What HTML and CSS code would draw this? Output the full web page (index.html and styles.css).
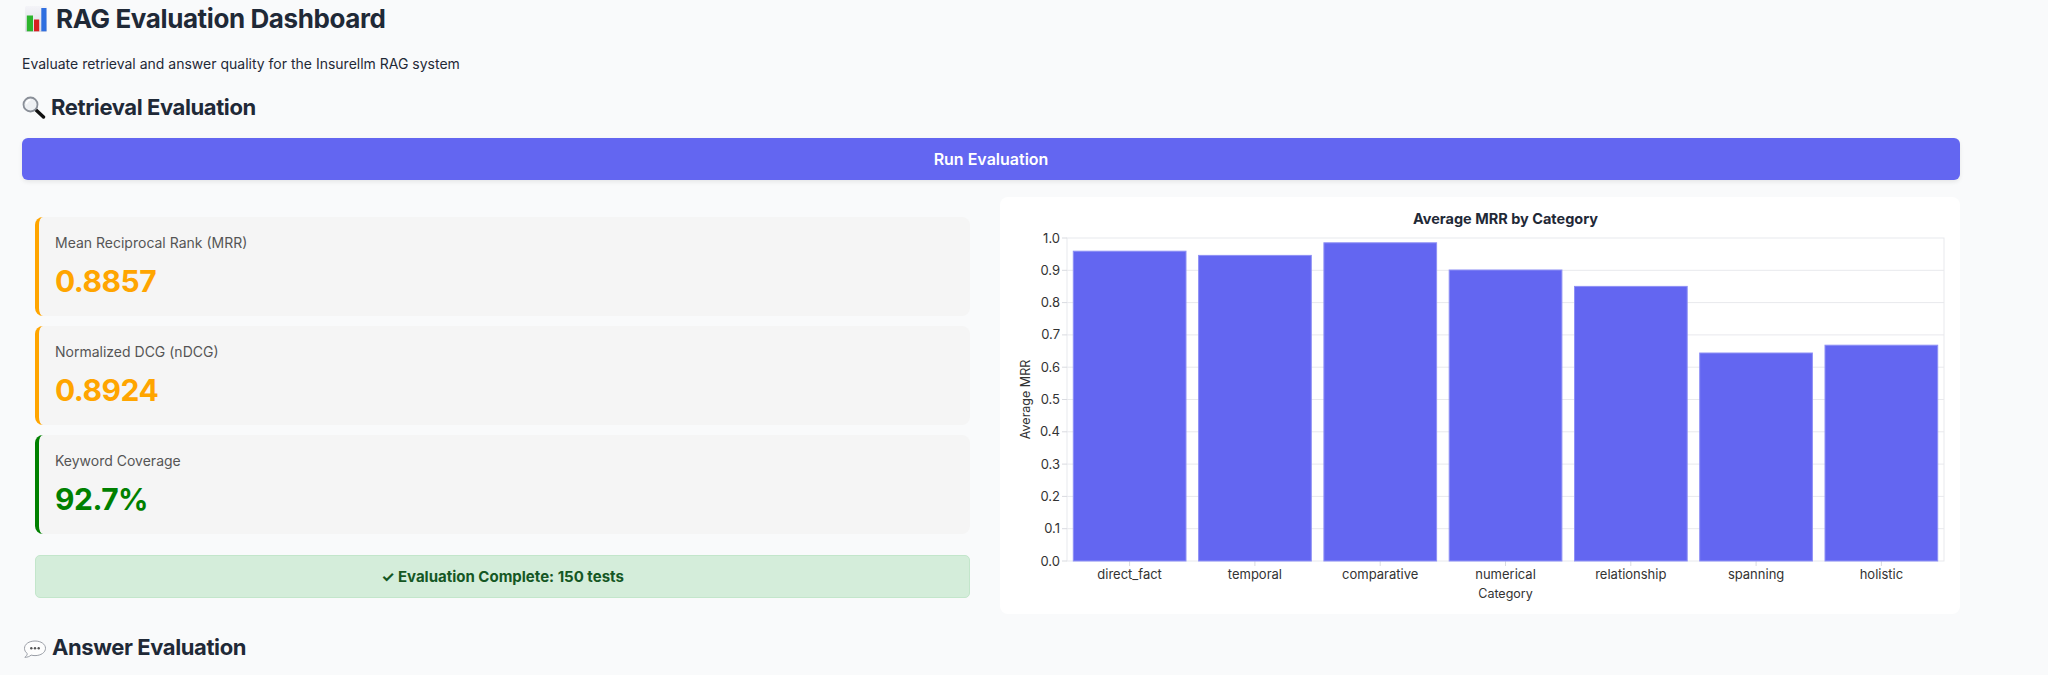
FILE: index.html
```html
<!DOCTYPE html>
<html lang="en">
<head>
<meta charset="utf-8">
<title>RAG Evaluation Dashboard</title>
<link rel="stylesheet" href="styles.css">
</head>
<body>
<main class="page">
  <h1 class="title">
    <svg class="emoji emoji-chart" viewBox="0 0 22 26" aria-hidden="true">
      <defs>
        <linearGradient id="bgG" x1="0" y1="0" x2="0" y2="1">
          <stop offset="0" stop-color="#f4f4f8"/>
          <stop offset="1" stop-color="#dcdce4"/>
        </linearGradient>
      </defs>
      <rect x="0" y="0" width="22" height="26" rx="1.5" fill="url(#bgG)"/>
      <rect x="1.8" y="9.5" width="6.2" height="15.8" fill="#2db52d"/>
      <rect x="9" y="13.5" width="5.2" height="11.8" fill="#d62020"/>
      <rect x="16.3" y="2" width="5.2" height="23.3" fill="#2f6fe0"/>
    </svg>
    <span>RAG Evaluation Dashboard</span>
  </h1>
  <p class="subtitle">Evaluate retrieval and answer quality for the Insurellm RAG system</p>

  <h2 class="section-title">
    <svg class="emoji emoji-search" viewBox="0 0 24 23" aria-hidden="true">
      <line x1="13.5" y1="13.5" x2="21.5" y2="21" stroke="#111" stroke-width="3.4" stroke-linecap="round"/>
      <circle cx="8.5" cy="8.5" r="7" fill="#eef0f3" stroke="#8a8f98" stroke-width="1.8"/>
      <path d="M4.5 7.5 A4.5 4.5 0 0 1 8 4" fill="none" stroke="#fff" stroke-width="1.4" stroke-linecap="round"/>
    </svg>
    <span>Retrieval Evaluation</span>
  </h2>

  <button class="run-btn" type="button">Run Evaluation</button>

  <section class="results">
    <div class="metrics">
      <div class="metric metric-orange">
        <div class="metric-label">Mean Reciprocal Rank (MRR)</div>
        <div class="metric-value">0.8857</div>
      </div>
      <div class="metric metric-orange">
        <div class="metric-label">Normalized DCG (nDCG)</div>
        <div class="metric-value">0.8924</div>
      </div>
      <div class="metric metric-green">
        <div class="metric-label">Keyword Coverage</div>
        <div class="metric-value">92.7%</div>
      </div>
      <div class="status">✓ Evaluation Complete: 150 tests</div>
    </div>

    <div class="chart-card">
      <svg class="chart" viewBox="0 0 960 417" aria-label="Average MRR by Category">
        <text class="chart-title" x="505.5" y="27" text-anchor="middle">Average MRR by Category</text>
        <g class="grid">
          <line x1="67" x2="944" y1="331.7" y2="331.7"/>
          <line x1="67" x2="944" y1="299.4" y2="299.4"/>
          <line x1="67" x2="944" y1="267.1" y2="267.1"/>
          <line x1="67" x2="944" y1="234.8" y2="234.8"/>
          <line x1="67" x2="944" y1="202.5" y2="202.5"/>
          <line x1="67" x2="944" y1="170.2" y2="170.2"/>
          <line x1="67" x2="944" y1="137.9" y2="137.9"/>
          <line x1="67" x2="944" y1="105.6" y2="105.6"/>
          <line x1="67" x2="944" y1="73.3" y2="73.3"/>
          <rect x="67" y="41" width="877" height="323" fill="none"/>
        </g>
        <g class="ticks">
          <line x1="62" x2="67" y1="364" y2="364"/>
          <line x1="62" x2="67" y1="331.7" y2="331.7"/>
          <line x1="62" x2="67" y1="299.4" y2="299.4"/>
          <line x1="62" x2="67" y1="267.1" y2="267.1"/>
          <line x1="62" x2="67" y1="234.8" y2="234.8"/>
          <line x1="62" x2="67" y1="202.5" y2="202.5"/>
          <line x1="62" x2="67" y1="170.2" y2="170.2"/>
          <line x1="62" x2="67" y1="137.9" y2="137.9"/>
          <line x1="62" x2="67" y1="105.6" y2="105.6"/>
          <line x1="62" x2="67" y1="73.3" y2="73.3"/>
          <line x1="62" x2="67" y1="41" y2="41"/>
          <line x1="129.6" x2="129.6" y1="364" y2="369"/>
          <line x1="254.9" x2="254.9" y1="364" y2="369"/>
          <line x1="380.2" x2="380.2" y1="364" y2="369"/>
          <line x1="505.5" x2="505.5" y1="364" y2="369"/>
          <line x1="630.8" x2="630.8" y1="364" y2="369"/>
          <line x1="756.1" x2="756.1" y1="364" y2="369"/>
          <line x1="881.4" x2="881.4" y1="364" y2="369"/>
        </g>
        <g class="bars">
          <rect x="73.3" y="54.2" width="112.7" height="309.8"/>
          <rect x="198.6" y="58.4" width="112.7" height="305.6"/>
          <rect x="323.9" y="45.8" width="112.7" height="318.2"/>
          <rect x="449.2" y="73.0" width="112.7" height="291.0"/>
          <rect x="574.5" y="89.4" width="112.7" height="274.6"/>
          <rect x="699.7" y="156.0" width="112.7" height="208.0"/>
          <rect x="825.0" y="148.2" width="112.7" height="215.8"/>
        </g>
        <g class="y-labels" text-anchor="end">
          <text x="60" y="368.5">0.0</text>
          <text x="60" y="336.2">0.1</text>
          <text x="60" y="303.9">0.2</text>
          <text x="60" y="271.6">0.3</text>
          <text x="60" y="239.3">0.4</text>
          <text x="60" y="207">0.5</text>
          <text x="60" y="174.7">0.6</text>
          <text x="60" y="142.4">0.7</text>
          <text x="60" y="110.1">0.8</text>
          <text x="60" y="77.8">0.9</text>
          <text x="60" y="45.5">1.0</text>
        </g>
        <g class="x-labels" text-anchor="middle">
          <text x="129.6" y="382">direct_fact</text>
          <text x="254.9" y="382">temporal</text>
          <text x="380.2" y="382">comparative</text>
          <text x="505.5" y="382">numerical</text>
          <text x="630.8" y="382">relationship</text>
          <text x="756.1" y="382">spanning</text>
          <text x="881.4" y="382">holistic</text>
        </g>
        <text class="axis-title" x="505.5" y="401" text-anchor="middle">Category</text>
        <text class="axis-title" x="0" y="0" text-anchor="middle" transform="translate(30 202.5) rotate(-90)">Average MRR</text>
      </svg>
    </div>
  </section>

  <h2 class="section-title">
    <svg class="emoji emoji-bubble" viewBox="0 0 24 18" aria-hidden="true">
      <path d="M12 1 C18 1 22.5 4.2 22.5 8.3 C22.5 12.4 18 15.6 12 15.6 C10.6 15.6 9.3 15.4 8.1 15.1 C6.6 16.5 4.2 17.4 1.8 17.3 C3.2 16.4 4.1 15.1 4.3 13.6 C2.5 12.2 1.5 10.4 1.5 8.3 C1.5 4.2 6 1 12 1 Z" fill="#fdfdfd" stroke="#9a9ea6" stroke-width="1"/>
      <circle cx="8.3" cy="8.3" r="1.2" fill="#555"/>
      <circle cx="12" cy="8.3" r="1.2" fill="#555"/>
      <circle cx="15.7" cy="8.3" r="1.2" fill="#555"/>
    </svg>
    <span>Answer Evaluation</span>
  </h2>
</main>
</body>
</html>
```

FILE: styles.css
```css
html, body {
  margin: 0;
  padding: 0;
}

body {
  background: #f9fafb;
  font-family: Inter, "Noto Sans", "Liberation Sans", sans-serif;
  color: #1f2937;
}

.page {
  width: 1938px;
  margin-left: 22px;
  display: flex;
  flex-direction: column;
}

.title {
  margin: 0;
  height: 37px;
  display: flex;
  align-items: center;
  gap: 9px;
  font-size: 26px;
  font-weight: 700;
  letter-spacing: -0.4px;
  color: #1f2937;
}

.emoji {
  flex: none;
  display: block;
}

.emoji-chart {
  width: 22px;
  height: 26px;
  margin-left: 3px;
}

.subtitle {
  margin: 16px 0 0;
  font-size: 14px;
  line-height: 21px;
  color: #1f2937;
}

.section-title {
  margin: 18px 0 0;
  height: 30px;
  display: flex;
  align-items: center;
  gap: 5px;
  font-size: 22px;
  font-weight: 700;
  letter-spacing: -0.4px;
  color: #1f2937;
}

.emoji-search {
  width: 24px;
  height: 23px;
}

.emoji-bubble {
  width: 24px;
  height: 18px;
  margin-left: 1px;
  margin-top: 4px;
}

.run-btn {
  margin-top: 16px;
  height: 42px;
  width: 100%;
  border: none;
  border-radius: 6px;
  background: #6366f1;
  color: #ffffff;
  font-family: inherit;
  font-size: 16px;
  font-weight: 600;
  box-shadow: 0 2px 4px rgba(0, 0, 0, 0.08);
  cursor: pointer;
}

.results {
  margin-top: 17px;
  display: grid;
  grid-template-columns: 948px 960px;
  column-gap: 30px;
  align-items: start;
}

.metrics {
  padding: 20px 0 0 13px;
  display: flex;
  flex-direction: column;
  gap: 10px;
}

.metric {
  height: 99px;
  box-sizing: border-box;
  padding: 16px 16px 0;
  background: #f5f5f5;
  border-radius: 8px;
  border-left: 4px solid #ffa500;
  display: flex;
  flex-direction: column;
  gap: 10px;
}

.metric-green {
  border-left-color: #008000;
}

.metric-label {
  font-size: 14px;
  line-height: 20px;
  color: #555555;
}

.metric-value {
  font-size: 30px;
  line-height: 36px;
  font-weight: 700;
  letter-spacing: -0.5px;
  color: #ffa500;
}

.metric-green .metric-value {
  color: #008000;
}

.status {
  margin-top: 11px;
  height: 43px;
  box-sizing: border-box;
  background: #d4edda;
  border: 1px solid #c3e6cb;
  border-radius: 5px;
  color: #155724;
  font-size: 15px;
  font-weight: 700;
  display: flex;
  align-items: center;
  justify-content: center;
}

.chart-card {
  height: 417px;
  background: #ffffff;
  border-radius: 8px;
  overflow: hidden;
}

.chart {
  display: block;
  width: 960px;
  height: 417px;
  font-family: Inter, "Noto Sans", "Liberation Sans", sans-serif;
}

.chart-title {
  font-size: 14.5px;
  font-weight: 700;
  fill: #1f2937;
}

.grid line,
.grid rect {
  stroke: #e8e9ed;
  stroke-width: 1;
}

.ticks line {
  stroke: #d9dbe0;
  stroke-width: 1;
}

.bars rect {
  fill: #6366f1;
  stroke: #8e90f5;
  stroke-width: 1;
}

.y-labels text,
.x-labels text {
  font-size: 13px;
  fill: #333333;
}

.axis-title {
  font-size: 12.5px;
  fill: #333333;
}
```
